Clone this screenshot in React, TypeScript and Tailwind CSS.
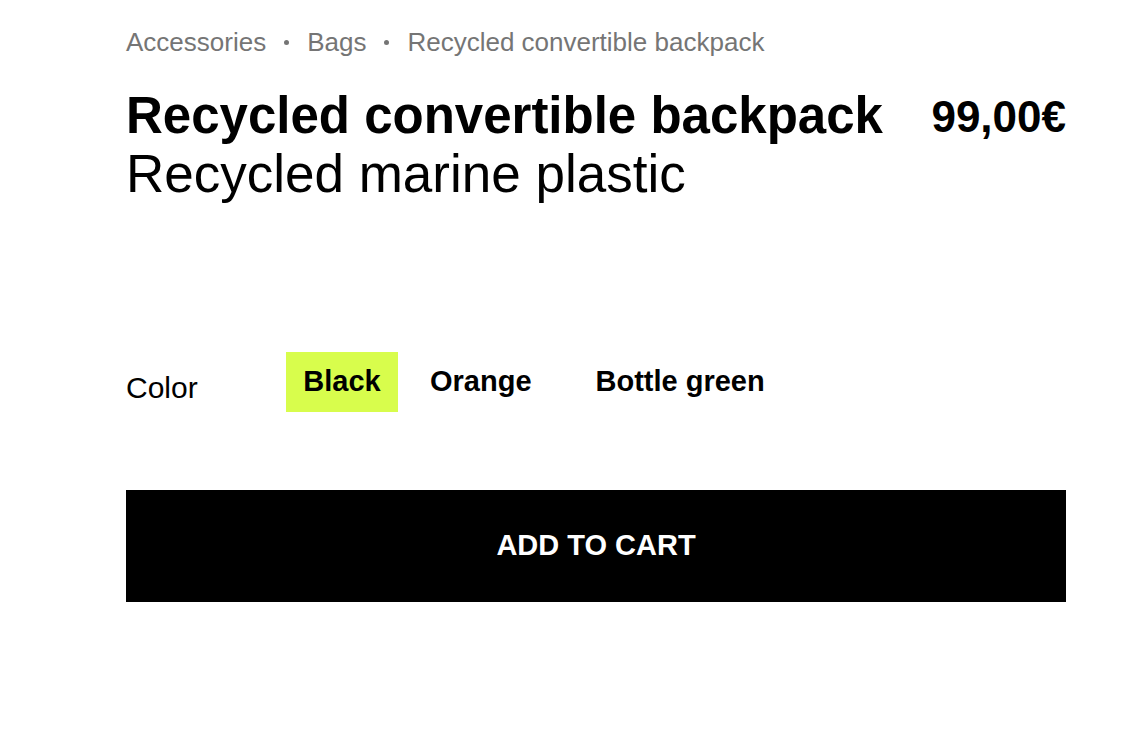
import { FC } from "react";

const colors = [
  { name: "Black", cls: "" },
  { name: "Orange", cls: "" },
  { name: "Bottle green", cls: "ml-[16px]" },
];

const Dot: FC = () => (
  <span className="mx-[18px] w-[5px] h-[5px] rounded-full bg-[#757575]" />
);

const App: FC = () => {
  const selected = "Black";

  return (
    <div
      className="w-[1136px] h-[746px] bg-white text-black"
      style={{ fontFamily: '"Liberation Sans", Arial, sans-serif' }}
    >
      <div className="ml-[126px] w-[940px] pt-[26px]">
        <nav className="flex items-center text-[26px] leading-[32px] text-[#757575]">
          <span>Accessories</span>
          <Dot />
          <span>Bags</span>
          <Dot />
          <span>Recycled convertible backpack</span>
        </nav>

        <div className="flex justify-between items-start mt-[29px]">
          <div>
            <h1 className="text-[51px] leading-[58px] font-bold">
              Recycled convertible backpack
            </h1>
            <p className="text-[53px] leading-[58px]">Recycled marine plastic</p>
          </div>
          <p className="text-[44px] leading-[60px] font-bold">99,00€</p>
        </div>

        <div className="flex items-center mt-[149px]">
          <span className="w-[160px] text-[30px] pt-[10px]">Color</span>
          <div className="flex items-center gap-[16px]">
            {colors.map((c) => (
              <button
                key={c.name}
                className={`h-[60px] px-[16px] text-[29px] font-bold ${c.cls} ${
                  c.name === selected ? "w-[112px] bg-[#d8fd4c]" : "bg-transparent"
                }`}
              >
                {c.name}
              </button>
            ))}
          </div>
        </div>

        <button className="mt-[78px] w-full h-[112px] bg-black text-white text-[29px] font-bold">
          ADD TO CART
        </button>
      </div>
    </div>
  );
};

export default App;
